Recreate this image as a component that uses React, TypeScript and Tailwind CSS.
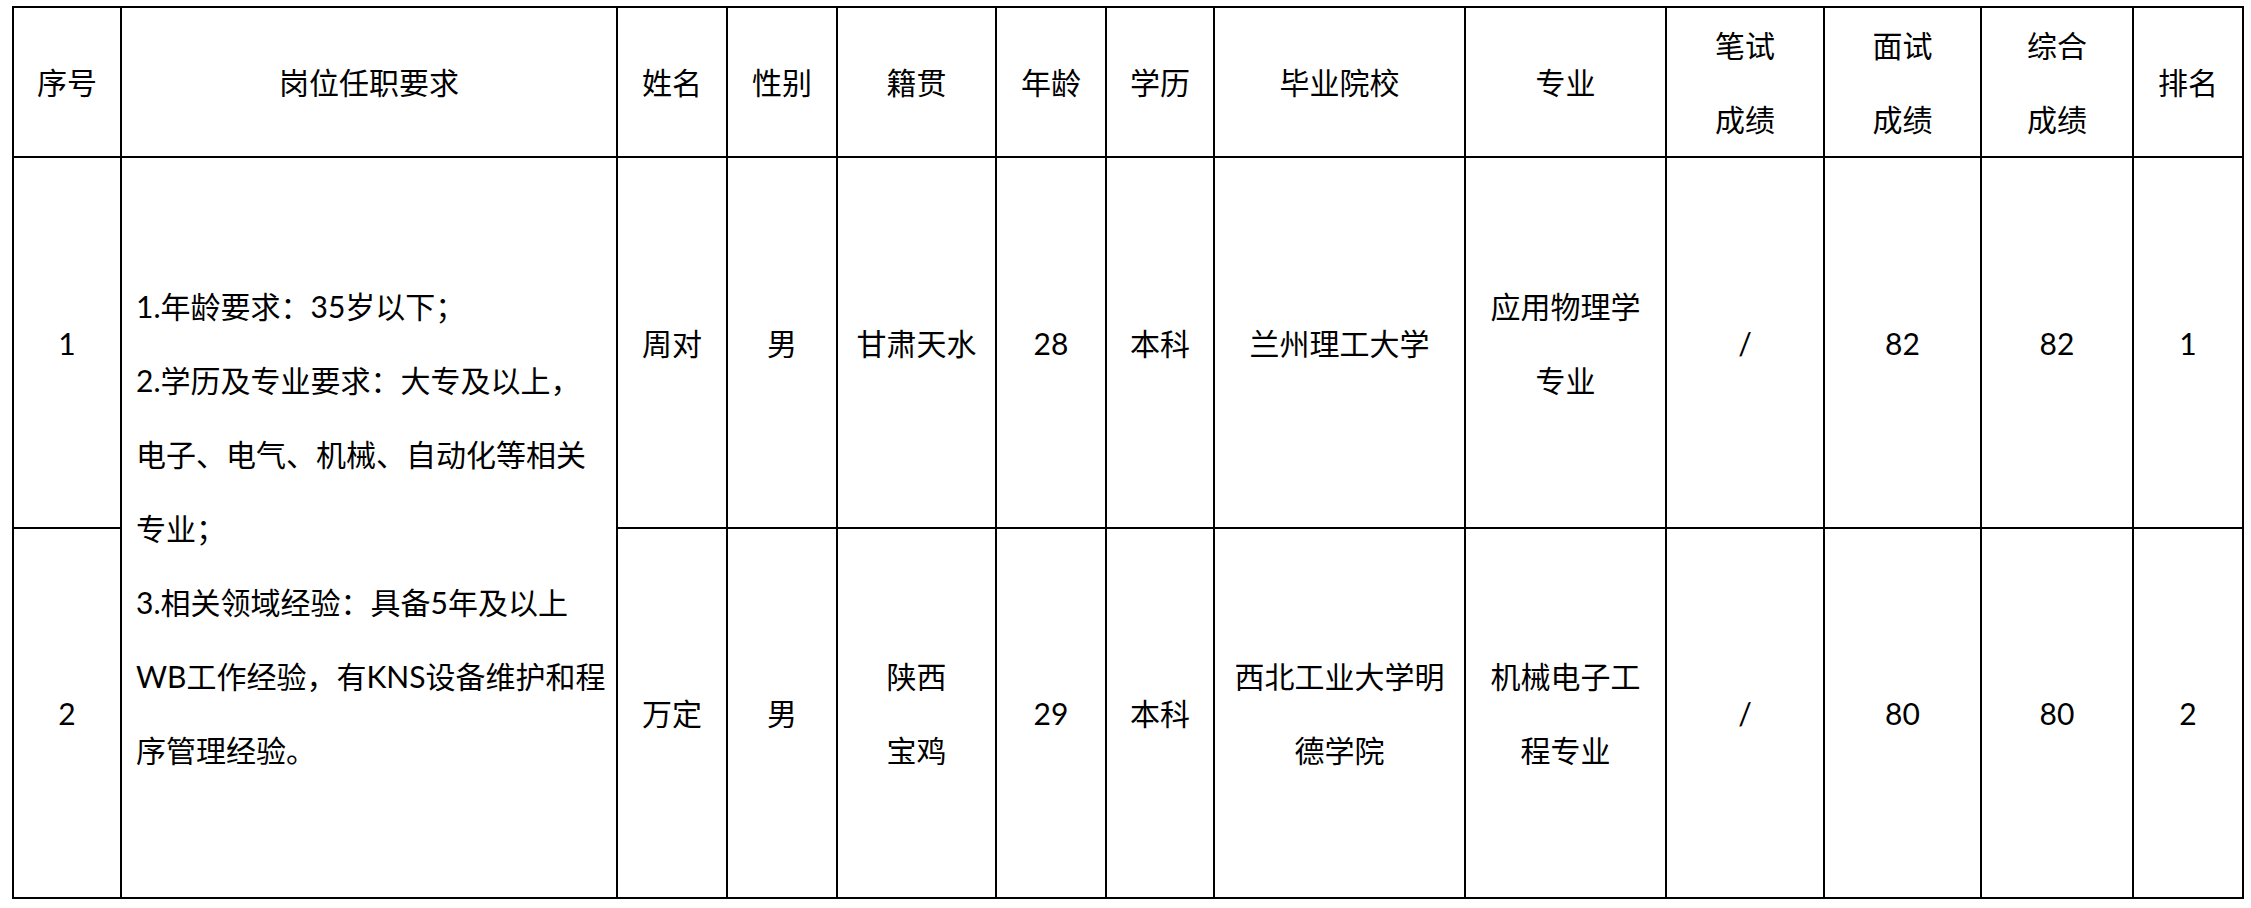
const headers: string[][] = [
  ["序号"],
  ["岗位任职要求"],
  ["姓名"],
  ["性别"],
  ["籍贯"],
  ["年龄"],
  ["学历"],
  ["毕业院校"],
  ["专业"],
  ["笔试", "成绩"],
  ["面试", "成绩"],
  ["综合", "成绩"],
  ["排名"],
];

const requirements = [
  "1.年龄要求：35岁以下；",
  "2.学历及专业要求：大专及以上，",
  "电子、电气、机械、自动化等相关",
  "专业；",
  "3.相关领域经验：具备5年及以上",
  "WB工作经验，有KNS设备维护和程",
  "序管理经验。",
];

// each row: seq, then columns after the merged requirement cell
const rows: { seq: string; cells: string[][] }[] = [
  {
    seq: "1",
    cells: [["周对"], ["男"], ["甘肃天水"], ["28"], ["本科"], ["兰州理工大学"], ["应用物理学", "专业"], ["/"], ["82"], ["82"], ["1"]],
  },
  {
    seq: "2",
    cells: [["万定"], ["男"], ["陕西", "宝鸡"], ["29"], ["本科"], ["西北工业大学明", "德学院"], ["机械电子工", "程专业"], ["/"], ["80"], ["80"], ["2"]],
  },
];

function Cell({ lines }: { lines: string[] }) {
  return (
    <div className="flex flex-col items-center justify-center bg-white text-center">
      {lines.map((line) => (
        <div key={line} className="whitespace-nowrap leading-[74px]">
          {line}
        </div>
      ))}
    </div>
  );
}

export default function App() {
  return (
    <div className="min-h-[908px] w-[2251px] bg-white pl-[12px] pt-[6px] text-[30px] text-black [font-family:Lato,'Noto_Sans_CJK_SC',sans-serif]">
      <div className="grid w-[2232px] grid-cols-[106px_494px_108px_108px_157px_108px_106px_249px_199px_156px_155px_150px_108px] grid-rows-[148px_369px_368px] gap-[2px] bg-black p-[2px]">
        {headers.map((h) => (
          <Cell key={h.join("")} lines={h} />
        ))}

        {rows.map((row, i) => (
          <div key={row.seq} className="contents">
            <Cell lines={[row.seq]} />
            {i === 0 ? (
              <div className="row-span-2 flex flex-col justify-center bg-white pl-[14px]">
                {requirements.map((line) => (
                  <div key={line} className="whitespace-nowrap leading-[74px]">
                    {line}
                  </div>
                ))}
              </div>
            ) : null}
            {row.cells.map((c, j) => (
              <Cell key={j} lines={c} />
            ))}
          </div>
        ))}
      </div>
    </div>
  );
}
